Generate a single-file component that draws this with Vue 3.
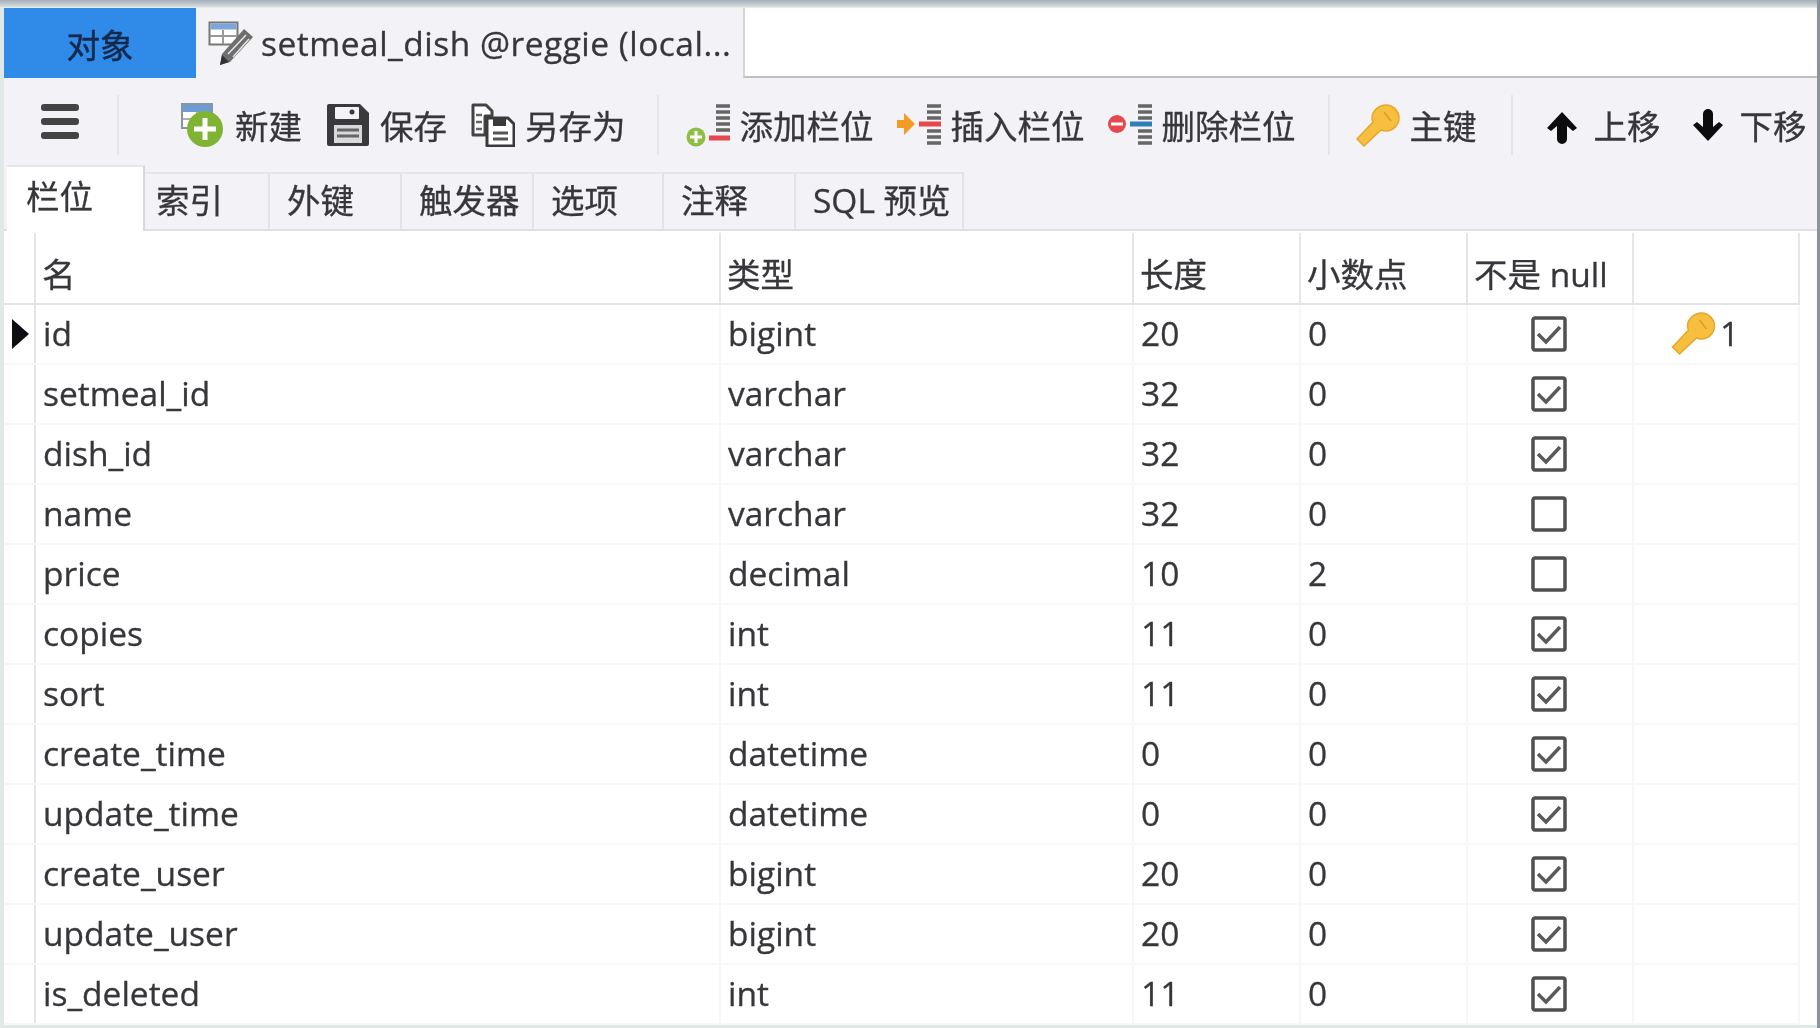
<template>
  <div class="app">
    <!-- Top tabs -->
    <div class="doc-tabs">
      <div class="doc-tab objects">对象</div>
      <div class="doc-tab current">
        <svg class="tab-icon" viewBox="0 0 45 44">
          <rect x="1.5" y="1.5" width="28" height="22" fill="#fff" stroke="#777" stroke-width="2"/>
          <rect x="2.5" y="2.5" width="26" height="6" fill="#7fa6d8"/>
          <path d="M15 9v14M2 15h27" stroke="#999" stroke-width="2"/>
          <path d="M36 8l9 8-23 25-10 3 2-11z" fill="#6e6e70"/>
          <path d="M20 33l18-19M25 36l16-18" stroke="#e6e6e6" stroke-width="1.5"/>
          <path d="M12 44l2-10 7 7z" fill="#333"/>
        </svg>
        <span>setmeal_dish @reggie (local...</span>
      </div>
      <div class="doc-rest"></div>
    </div>

    <!-- Toolbar -->
    <div class="toolbar">
      <div class="menu-btn"><i></i><i></i><i></i></div>
      <div class="tool-group first">
        <div class="tool">
          <svg viewBox="0 0 44 44">
            <rect x="1" y="1" width="30" height="24" fill="#fff" stroke="#8a93a0" stroke-width="2"/>
            <rect x="2" y="2" width="28" height="7" fill="#6d9bd6"/>
            <path d="M16 9v15M2 16h28" stroke="#a8b0bb" stroke-width="2"/>
            <circle cx="24" cy="26" r="18" fill="#7fb432"/>
            <path d="M24 15v22M13 26h22" stroke="#fff" stroke-width="5"/>
          </svg>
          <span>新建</span>
        </div>
        <div class="tool">
          <svg viewBox="0 0 44 44">
            <path d="M1 3a2 2 0 0 1 2-2h31l9 9v31a2 2 0 0 1-2 2H3a2 2 0 0 1-2-2z" fill="#3a3a3c"/>
            <rect x="9" y="4" width="24" height="12" rx="1" fill="#f3f2f7"/>
            <circle cx="26" cy="9" r="2.5" fill="#3a3a3c"/>
            <rect x="8" y="22" width="28" height="18" fill="#d8d8dc"/>
            <path d="M11 27h22M11 33h22" stroke="#666" stroke-width="3"/>
          </svg>
          <span>保存</span>
        </div>
        <div class="tool">
          <svg viewBox="0 0 44 44">
            <path d="M2 2h13l6 6v5h-7v19H2z" fill="#fff" stroke="#444" stroke-width="3" stroke-linejoin="round"/>
            <path d="M5 12h6M5 19h6M5 26h6" stroke="#666" stroke-width="2.5"/>
            <path d="M16 15h21l6 6v22H16z" fill="#fff" stroke="#3a3a3c" stroke-width="3" stroke-linejoin="round"/>
            <rect x="22" y="15" width="13" height="8" fill="#3a3a3c"/>
            <path d="M22 30h15M22 36h15" stroke="#555" stroke-width="3"/>
          </svg>
          <span>另存为</span>
        </div>
      </div>
      <div class="tool-group columns">
        <div class="tool">
          <svg viewBox="0 0 44 44">
            <path d="M30 3h14M30 9h14M30 15h14M30 21h14M30 27h14" stroke="#666" stroke-width="3.5"/>
            <path d="M23 35h21" stroke="#e5484d" stroke-width="5"/>
            <circle cx="10" cy="34" r="9.5" fill="#8fbe45"/>
            <path d="M10 28v12M4 34h12" stroke="#fff" stroke-width="3"/>
          </svg>
          <span>添加栏位</span>
        </div>
        <div class="tool">
          <svg viewBox="0 0 44 44">
            <path d="M30 3h14M30 9h14M30 15h14M30 28h14M30 34h14M30 40h14" stroke="#666" stroke-width="3.5"/>
            <path d="M22 21h22" stroke="#e5484d" stroke-width="5"/>
            <path d="M0 17h7v-7l11 11-11 11v-7H0z" fill="#f59a23"/>
          </svg>
          <span>插入栏位</span>
        </div>
        <div class="tool">
          <svg viewBox="0 0 44 44">
            <path d="M30 3h14M30 9h14M30 15h14M30 28h14M30 34h14M30 40h14" stroke="#666" stroke-width="3.5"/>
            <path d="M22 21h22" stroke="#2f7fb5" stroke-width="5"/>
            <circle cx="9" cy="21" r="9" fill="#e5484d"/>
            <path d="M3 21h12" stroke="#fff" stroke-width="3"/>
          </svg>
          <span>删除栏位</span>
        </div>
      </div>
      <div class="tool-group primary">
        <div class="tool">
          <svg viewBox="0 0 44 44">
            <path d="M30 2c7 0 13 6 13 13s-6 13-13 13c-2 0-4-.5-5-1L8 43l-7-7 16-17c-1-2-1-3-1-4C16 8 23 2 30 2z" fill="#f6bf3f" stroke="#e7a82a" stroke-width="1.5"/>
            <path d="M28 9l7 9" stroke="#e09c20" stroke-width="1.5"/>
          </svg>
          <span>主键</span>
        </div>
      </div>
      <div class="tool-group last">
        <div class="tool">
          <svg viewBox="0 0 44 44">
            <path d="M22 9L7 25l4 3 6-5v13a5 5 0 0 0 10 0V23l6 5 4-3z" fill="#0c0c0c"/>
          </svg>
          <span>上移</span>
        </div>
        <div class="tool">
          <svg viewBox="0 0 44 44">
            <path d="M22 38L7 22l4-3 6 5V11a5 5 0 0 1 10 0v13l6-5 4 3z" fill="#0c0c0c"/>
          </svg>
          <span>下移</span>
        </div>
      </div>
    </div>

    <!-- Designer tabs -->
    <div class="sub-tabs">
      <div class="sub-tab active">栏位</div>
      <div v-for="t in subTabs" :key="t.label" class="sub-tab" :class="t.size">{{ t.label }}</div>
    </div>

    <!-- Field grid -->
    <div class="grid">
      <div class="row head">
        <div class="cell marker"></div>
        <div class="cell">名</div>
        <div class="cell">类型</div>
        <div class="cell">长度</div>
        <div class="cell">小数点</div>
        <div class="cell">不是 null</div>
        <div class="cell"></div>
      </div>
      <div v-for="(f, i) in fields" :key="f.name" class="row">
        <div class="cell marker"><i v-if="i === 0" class="arrow"></i></div>
        <div class="cell">{{ f.name }}</div>
        <div class="cell">{{ f.type }}</div>
        <div class="cell">{{ f.len }}</div>
        <div class="cell">{{ f.dec }}</div>
        <div class="cell center">
          <svg class="check" viewBox="0 0 36 36">
            <rect x="2" y="2" width="32" height="32" rx="2" fill="#fff" stroke="#505052" stroke-width="3.5"/>
            <path v-if="f.notNull" d="M7 18l8 8 14-15" fill="none" stroke="#5a5a5c" stroke-width="3.5"/>
          </svg>
        </div>
        <div class="cell key-cell">
          <template v-if="f.key">
            <svg class="row-key" viewBox="0 0 44 44">
              <path d="M30 2c7 0 13 6 13 13s-6 13-13 13c-2 0-4-.5-5-1L8 43l-7-7 16-17c-1-2-1-3-1-4C16 8 23 2 30 2z" fill="#f6bf3f" stroke="#e7a82a" stroke-width="1.5"/>
              <path d="M28 9l7 9" stroke="#e09c20" stroke-width="1.5"/>
            </svg>
            <span>{{ f.key }}</span>
          </template>
        </div>
      </div>
    </div>
  </div>
</template>

<script setup>
const subTabs = [
  { label: '索引', size: 'narrow' },
  { label: '外键' },
  { label: '触发器' },
  { label: '选项', size: 'slim' },
  { label: '注释' },
  { label: 'SQL 预览', size: 'wide' }
]

const fields = [
  { name: 'id', type: 'bigint', len: 20, dec: 0, notNull: true, key: 1 },
  { name: 'setmeal_id', type: 'varchar', len: 32, dec: 0, notNull: true },
  { name: 'dish_id', type: 'varchar', len: 32, dec: 0, notNull: true },
  { name: 'name', type: 'varchar', len: 32, dec: 0, notNull: false },
  { name: 'price', type: 'decimal', len: 10, dec: 2, notNull: false },
  { name: 'copies', type: 'int', len: 11, dec: 0, notNull: true },
  { name: 'sort', type: 'int', len: 11, dec: 0, notNull: true },
  { name: 'create_time', type: 'datetime', len: 0, dec: 0, notNull: true },
  { name: 'update_time', type: 'datetime', len: 0, dec: 0, notNull: true },
  { name: 'create_user', type: 'bigint', len: 20, dec: 0, notNull: true },
  { name: 'update_user', type: 'bigint', len: 20, dec: 0, notNull: true },
  { name: 'is_deleted', type: 'int', len: 11, dec: 0, notNull: true }
]
</script>

<style>
html, body { margin: 0; background: #fff; }
</style>

<style scoped>
.app {
  width: 1820px; height: 1028px; overflow: hidden; box-sizing: border-box;
  padding: 8px 0 4px 4px; border-right: 3px solid #8a949c;
  background: linear-gradient(#a3afb8 0, #d8dde2 7px, #e1e9e6 7px);
  font-family: "Open Sans", "Noto Sans CJK SC", sans-serif;
  font-size: 33.5px; color: #37373b;
  -webkit-text-stroke: 0.3px #37373b;
  filter: blur(0.7px);
  display: flex; flex-direction: column;
}

/* Top tabs */
.doc-tabs { height: 70px; display: flex; flex-shrink: 0; background: #f3f2f7; }
.doc-tab { display: flex; align-items: center; }
.objects {
  width: 192px; justify-content: center; background: #2f8ae8; color: #14294d;
  -webkit-text-stroke: 0.5px #14294d;
  font-family: "Noto Sans CJK SC", sans-serif;
}
.current { width: 547px; padding-left: 12px; box-sizing: border-box; gap: 8px; white-space: nowrap; letter-spacing: 0.5px; }
.tab-icon { width: 45px; height: 44px; flex-shrink: 0; }
.doc-rest { flex: 1; background: #fff; border-left: 2px solid #d5d5d8; border-bottom: 2px solid #bfbfc2; }

/* Toolbar */
.toolbar {
  height: 87px; flex-shrink: 0; box-sizing: border-box; padding-top: 8px;
  background: #f3f2f7; display: flex; align-items: center;
}
.menu-btn { margin: -8px 0 0 37px; width: 38px; display: flex; flex-direction: column; gap: 7px; }
.menu-btn i { display: block; height: 7px; border-radius: 3px; background: #444; }
.tool-group {
  height: 60px; box-sizing: border-box; display: flex; align-items: center; gap: 25px;
  padding: 0 34px 0 28px; border-left: 2px solid #e6e6ea; margin-top: -2px;
}
.tool-group.first { margin-left: 38px; padding: 0 31px 0 62px; gap: 24px; }
.tool-group.columns { gap: 23px; padding: 0 32px 0 27px; }
.tool-group.primary { padding-left: 26px; }
.tool-group.last { padding-left: 27px; padding-right: 0; }
.tool { display: flex; align-items: center; gap: 10px; white-space: nowrap; font-family: "Noto Sans CJK SC", sans-serif; }
.tool svg { width: 44px; height: 44px; flex-shrink: 0; }

/* Designer tabs */
.sub-tabs {
  height: 66px; flex-shrink: 0; box-sizing: border-box; padding-left: 3px;
  background: #f3f2f7; display: flex; align-items: flex-end;
  border-bottom: 2px solid #e0e0e4;
}
.sub-tab {
  width: 132px; height: 57px; box-sizing: border-box; padding: 0 0 6px 17px;
  display: flex; align-items: center; white-space: nowrap;
  border-right: 2px solid #e3e3e8; border-top: 2px solid #e6e6ea;
}
.sub-tab.active {
  width: 138px; height: 66px; margin-bottom: -2px; padding: 0 0 10px 19px; background: #fff;
  border-right-color: #d8d8dc; border-top-color: #e6e6ea;
}
.sub-tab.narrow { width: 125px; padding-left: 11px; }
.sub-tab.slim { width: 130px; }
.sub-tab.wide { width: 168px; }

/* Grid */
.grid { flex: 1; background: #fff; padding-top: 2px; }
.row {
  height: 60px; width: 1796px; box-sizing: border-box; display: grid;
  grid-template-columns: 32px 685px 413px 167px 167px 166px 166px;
  border-bottom: 2px solid #f8f8fb;
}
.row.head { height: 72px; border-bottom: 2px solid #e4e4e8; }
.cell {
  box-sizing: border-box; padding: 0 0 2px 7px; display: flex; align-items: center;
  border-right: 2px solid #f7f7fa; white-space: nowrap;
}
.head .cell { border-right-color: #e6e6ea; padding: 10px 0 2px 6px; }
.marker { border-right-color: #e6e6ea; background: #fff; padding: 0; }
.arrow {
  display: block; margin-left: 8px; width: 0; height: 0;
  border-left: 17px solid #0d0d12; border-top: 15px solid transparent; border-bottom: 15px solid transparent;
}
.center { justify-content: center; padding: 0 3px 0 0; }
.check { width: 36px; height: 36px; }
.key-cell { padding-left: 37px; gap: 4px; }
.row-key { width: 45px; height: 44px; }
</style>
